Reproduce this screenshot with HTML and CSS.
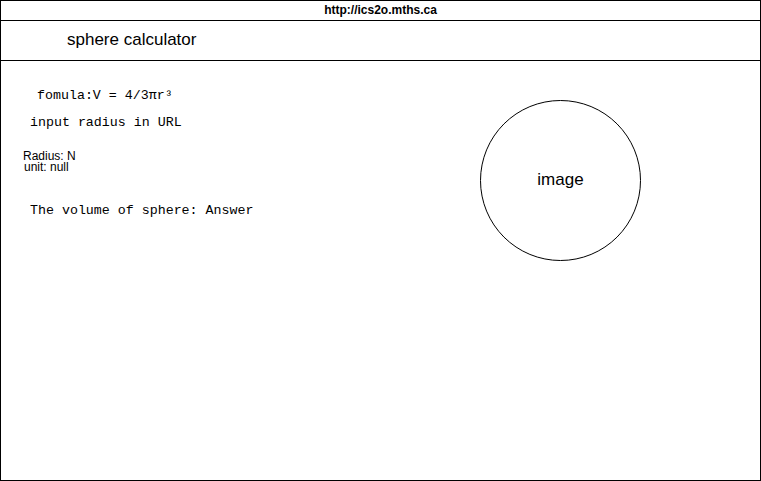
FILE: index.html
```html
<!DOCTYPE html>
<html>
<head>
<meta charset="utf-8">
<link rel="stylesheet" href="styles.css">
</head>
<body>
<div class="frame">
  <div class="urlbar">http://ics2o.mths.ca</div>
  <div class="titlebar">sphere calculator</div>
  <div class="content">
    <div class="left">
      <div class="mono formula">fomula:V = 4/3πr³</div>
      <div class="mono input">input radius in URL</div>
      <div class="info">
        <div class="radius">Radius: N</div>
        <div class="unit">unit: null</div>
      </div>
      <div class="mono volume">The volume of sphere: Answer</div>
    </div>
    <div class="circle"><span class="circle-label">image</span></div>
  </div>
</div>
</body>
</html>
```
FILE: styles.css
```css
html, body {
  margin: 0;
  padding: 0;
  background: #fff;
}
.frame {
  box-sizing: border-box;
  width: 761px;
  height: 481px;
  border: 1px solid #000;
  font-family: "Liberation Sans", Arial, sans-serif;
  color: #000;
  display: flex;
  flex-direction: column;
}
.urlbar {
  box-sizing: border-box;
  height: 20px;
  border-bottom: 1px solid #000;
  font-weight: bold;
  font-size: 12px;
  line-height: 19px;
  text-align: center;
}
.titlebar {
  box-sizing: border-box;
  height: 40px;
  border-bottom: 1px solid #000;
  font-size: 17px;
  line-height: 38px;
  padding-left: 66px;
}
.content {
  flex: 1;
  display: flex;
}
.left {
  width: 479px;
  display: flex;
  flex-direction: column;
}
.mono {
  font-family: "Liberation Mono", "Courier New", monospace;
  font-size: 13.3px;
  line-height: 15px;
}
.formula {
  margin-top: 27px;
  padding-left: 36px;
}
.input {
  margin-top: 12px;
  padding-left: 29px;
}
.info {
  margin-top: 21px;
  padding-left: 22px;
  font-size: 12px;
  line-height: 11px;
}
.unit {
  padding-left: 1px;
}
.volume {
  margin-top: 30px;
  padding-left: 29px;
}
.circle {
  box-sizing: border-box;
  width: 161px;
  height: 161px;
  margin-top: 39px;
  border: 1px solid #000;
  border-radius: 50%;
  display: flex;
  align-items: center;
  justify-content: center;
  font-size: 17px;
}
.circle-label {
  line-height: 20px;
  margin-top: -2px;
}
```
